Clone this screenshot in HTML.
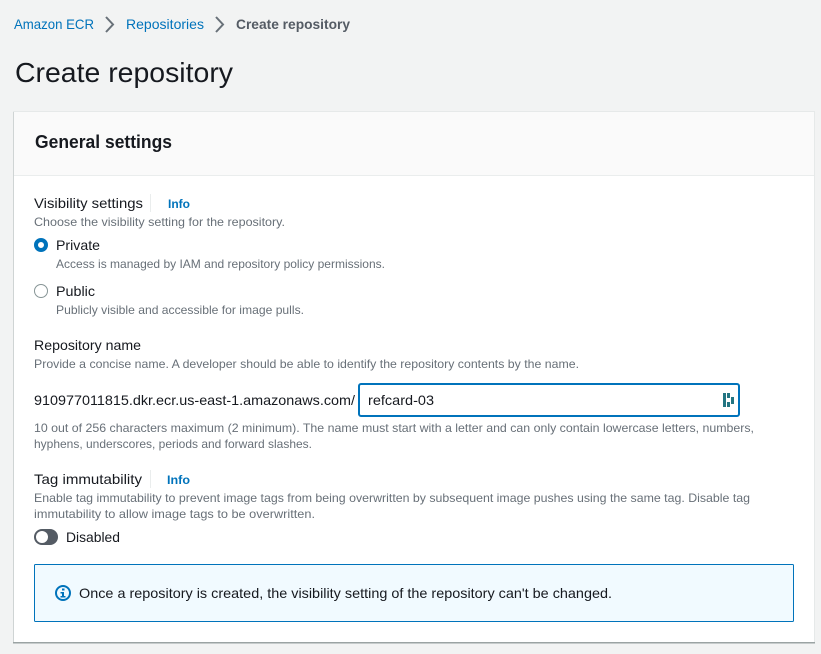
<!DOCTYPE html>
<html lang="en"><head><meta charset="utf-8"><title>Create repository</title>
<style>
html,body{margin:0;padding:0;background:#f2f3f3;width:821px;height:654px;overflow:hidden}
svg{display:block}
text{font-family:"Liberation Sans",Arial,sans-serif;white-space:pre}
.b{font-size:14px;fill:#16191f}
.d{font-size:12px;fill:#687078}
.l{font-size:14px;fill:#0073bb}
.i{font-size:12px;font-weight:700;fill:#0073bb}
</style></head><body>
<svg width="821" height="654" viewBox="0 0 821 654" xmlns="http://www.w3.org/2000/svg">
<rect width="821" height="654" fill="#f2f3f3"/>
<text class="l" x="14" y="29" textLength="80" lengthAdjust="spacingAndGlyphs">Amazon ECR</text>
<path d="M106 17l7 7.500-7 7.500" fill="none" stroke="#687078" stroke-width="2"/>
<text class="l" x="126" y="29" textLength="78" lengthAdjust="spacingAndGlyphs">Repositories</text>
<path d="M216 17l7 7.500-7 7.500" fill="none" stroke="#687078" stroke-width="2"/>
<text x="236" y="29" font-size="14" font-weight="700" fill="#545b64" textLength="114" lengthAdjust="spacingAndGlyphs">Create repository</text>
<text x="15" y="82" font-size="28" fill="#16191f" textLength="218" lengthAdjust="spacingAndGlyphs">Create repository</text>
<rect x="13" y="111" width="802" height="532" fill="#e6e9e9"/>
<rect x="13" y="112" width="1" height="530" fill="#cfd4d4"/>
<rect x="13" y="642" width="802" height="1.500" fill="#9ba3a3"/>
<rect x="14" y="112" width="800" height="530" fill="#fff"/>
<rect x="14" y="112" width="800" height="64" fill="#fafafa"/>
<rect x="14" y="175" width="800" height="1" fill="#eaeded"/>
<text x="35" y="148" font-size="18" font-weight="700" fill="#16191f" textLength="137" lengthAdjust="spacingAndGlyphs">General settings</text>
<text class="b" x="34" y="208" textLength="109" lengthAdjust="spacingAndGlyphs">Visibility settings</text>
<rect x="150" y="194" width="1" height="18" fill="#eaeded"/>
<text class="i" x="168" y="208" textLength="22" lengthAdjust="spacingAndGlyphs">Info</text>
<text class="d" x="34" y="226" textLength="251" lengthAdjust="spacingAndGlyphs">Choose the visibility setting for the repository.</text>
<circle cx="41" cy="245" r="5" fill="#fff" stroke="#0073bb" stroke-width="4"/>
<text class="b" x="56" y="250" textLength="44" lengthAdjust="spacingAndGlyphs">Private</text>
<text class="d" x="56" y="268" textLength="329" lengthAdjust="spacingAndGlyphs">Access is managed by IAM and repository policy permissions.</text>
<circle cx="41" cy="291" r="6.500" fill="#fff" stroke="#879596" stroke-width="1"/>
<text class="b" x="56" y="296" textLength="39" lengthAdjust="spacingAndGlyphs">Public</text>
<text class="d" x="56" y="314" textLength="248" lengthAdjust="spacingAndGlyphs">Publicly visible and accessible for image pulls.</text>
<text class="b" x="34" y="350" textLength="107" lengthAdjust="spacingAndGlyphs">Repository name</text>
<text class="d" x="34" y="368" textLength="545" lengthAdjust="spacingAndGlyphs">Provide a concise name. A developer should be able to identify the repository contents by the name.</text>
<text class="b" x="34" y="405" textLength="321" lengthAdjust="spacingAndGlyphs">910977011815.dkr.ecr.us-east-1.amazonaws.com/</text>
<rect x="359" y="384" width="380" height="32" rx="2" fill="#fff" stroke="#0073bb" stroke-width="2"/>
<text class="b" x="368" y="405" textLength="66" lengthAdjust="spacingAndGlyphs">refcard-03</text>
<g fill="#237582"><rect x="723" y="393" width="3" height="14"/><rect x="727" y="393" width="3" height="5"/><rect x="727" y="402" width="3" height="5"/><rect x="731" y="397" width="3" height="7"/></g>
<text class="d" x="34" y="432" textLength="720" lengthAdjust="spacingAndGlyphs">10 out of 256 characters maximum (2 minimum). The name must start with a letter and can only contain lowercase letters, numbers,</text>
<text class="d" x="34" y="448" textLength="278" lengthAdjust="spacingAndGlyphs">hyphens, underscores, periods and forward slashes.</text>
<text class="b" x="34" y="484" textLength="108" lengthAdjust="spacingAndGlyphs">Tag immutability</text>
<rect x="150" y="470" width="1" height="18" fill="#eaeded"/>
<text class="i" x="167" y="484" textLength="23" lengthAdjust="spacingAndGlyphs">Info</text>
<text class="d" x="34" y="502" textLength="716" lengthAdjust="spacingAndGlyphs">Enable tag immutability to prevent image tags from being overwritten by subsequent image pushes using the same tag. Disable tag</text>
<text class="d" x="34" y="518" textLength="281" lengthAdjust="spacingAndGlyphs">immutability to allow image tags to be overwritten.</text>
<rect x="34" y="529" width="24" height="16" rx="8" fill="#545b64"/>
<circle cx="42" cy="537" r="6" fill="#fff"/>
<text class="b" x="66" y="542" textLength="54" lengthAdjust="spacingAndGlyphs">Disabled</text>
<rect x="34.500" y="564.500" width="759" height="57" rx="1" fill="#f1faff" stroke="#0073bb"/>
<circle cx="63" cy="593" r="7" fill="none" stroke="#0073bb" stroke-width="2"/>
<path d="M62 588.500h2.500v2h-2.500zM60.500 592h3.500v4h1.500v1.500h-5v-1.500h1.500v-2.500h-1.500z" fill="#0073bb"/>
<text class="b" x="79" y="598" textLength="533" lengthAdjust="spacingAndGlyphs">Once a repository is created, the visibility setting of the repository can't be changed.</text>
</svg>
</body></html>
